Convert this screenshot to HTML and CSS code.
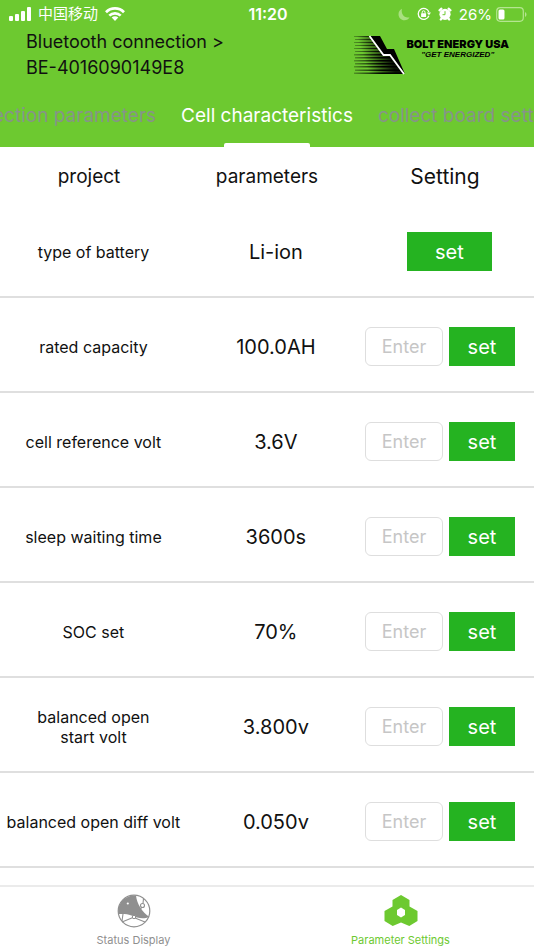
FILE: index.html
```html
<!DOCTYPE html>
<html lang="en">
<head>
<meta charset="utf-8">
<meta name="viewport" content="width=device-width, initial-scale=1">
<title>Parameter Settings</title>
<link rel="stylesheet" href="styles.css">
</head>
<body>
<header class="top">
  <div class="status">
    <div class="status-side">
      <svg width="22" height="14" viewBox="0 0 22 14" aria-hidden="true"><g fill="#fff"><rect x="0" y="9" width="4" height="5" rx="1"/><rect x="6" y="7" width="4" height="7" rx="1"/><rect x="12" y="4" width="4" height="10" rx="1"/><rect x="18" y="0" width="4" height="14" rx="1"/></g></svg>
      <span class="carrier" lang="zh">中国移动</span>
      <svg width="20" height="14" viewBox="0 0 20 14" aria-hidden="true"><g fill="none" stroke="#fff" stroke-width="2.7"><path d="M1 5.2C6 .2 14 .2 19 5.2"/><path d="M4.3 8.6C7.5 5.5 12.5 5.5 15.7 8.6"/></g><path d="M6.7 10.6C8.5 8.9 11.5 8.9 13.3 10.6L10 14Z" fill="#fff"/></svg>
    </div>
    <time class="clock">11:20</time>
    <div class="status-side status-right">
      <svg width="12" height="13" viewBox="0 0 12 13" aria-hidden="true"><path d="M4 .8C1.800 1.800.5 3.700.5 6.200c0 3.400 2.600 6 6 6 2.300 0 4.200-1.200 5-3-4.800 1.500-9-3-7.500-8.400Z" fill="#a9e07f"/></svg>
      <svg width="14" height="14" viewBox="0 0 14 14" aria-hidden="true"><path d="M11.900 8.700A5.500 5.500 0 1 1 11.900 5" fill="none" stroke="#fff" stroke-width="1.300"/><path d="M9.800 5.600h4.200L12 8.300Z" fill="#fff"/><rect x="4.100" y="6.200" width="5" height="3.700" rx=".5" fill="#fff"/><path d="M5.200 6.500V5.200a1.400 1.400 0 0 1 2.800 0v1.300" fill="none" stroke="#fff"/></svg>
      <svg width="14" height="14" viewBox="0 0 14 14" aria-hidden="true"><circle cx="7" cy="7.300" r="5.600" fill="#fff"/><g stroke="#fff" stroke-width="2.200" stroke-linecap="round"><path d="M1.500 3.300 3.400 1.700M12.500 3.300 10.600 1.700M2.800 12.500 4 11M11.200 12.500 10 11"/></g><path d="M7 4.200v3.500H4.500" fill="none" stroke="#6dc930" stroke-width="1"/></svg>
      <div class="power">
        <span>26%</span>
        <svg width="31" height="15" viewBox="0 0 31 15" aria-hidden="true"><rect x=".7" y=".7" width="26.600" height="13.600" rx="3.500" fill="none" stroke="#b5e591" stroke-width="1.200"/><rect x="2.500" y="2.500" width="6" height="10" rx="1.500" fill="#fff"/><path d="M29 5v5c2-1 2-4 0-5Z" fill="#b5e591"/></svg>
      </div>
    </div>
  </div>
  <div class="brand-row">
    <a class="device" href="#bluetooth">Bluetooth connection &gt;<br>BE-4016090149E8</a>
    <div class="brand">
      <svg width="53" height="40" viewBox="0 0 53 40" aria-hidden="true">
        <defs>
          <linearGradient id="streak" gradientUnits="userSpaceOnUse" x1="0" y1="0" x2="30" y2="0"><stop offset="0" stop-opacity=".25"/><stop offset="1"/></linearGradient>
          <linearGradient id="shade" gradientUnits="userSpaceOnUse" x1="6" y1="8" x2="30" y2="0"><stop offset="0" stop-opacity="0"/><stop offset="1" stop-opacity=".9"/></linearGradient>
        </defs>
        <path d="M1 1H18L31 20H37L51 39H1Z" fill="url(#shade)"/>
        <path d="M1 1H18V2H1ZM2 4H20V5H2ZM1 7H22V8H1ZM2 10H24V11H2ZM1 13H26V14H1ZM2 16H28V17H2ZM1 19H31V20.500H1ZM2 22H37V23.500H2ZM1 25H39V26.500H1ZM2 28H42V29.500H2ZM1 31H44V32.500H1ZM2 34.500H47V36H2ZM1 37.500H50V39H1Z" fill="url(#streak)"/>
        <path d="M17 1H27L34 14H41L52 39 37 21H31Z"/>
        <path d="M16.500 1 30.500 20H37L51 39" fill="none" stroke="#fff" stroke-width="1.800"/>
      </svg>
      <div class="brand-text"><span class="brand-name">BOLT ENERGY USA</span><span class="brand-tag">"GET ENERGIZED"</span></div>
    </div>
  </div>
  <nav class="tabs" aria-label="Parameter groups">
    <div class="tab-side tab-before"><a href="#protection">protection parameters</a></div>
    <a class="tab-active" href="#cell" aria-current="page">Cell characteristics</a>
    <div class="tab-side"><a href="#board">collect board settings</a></div>
  </nav>
</header>
<main class="content">
  <table class="params">
    <thead><tr><th>project</th><th>parameters</th><th class="th-large">Setting</th></tr></thead>
    <tbody>
      <tr><th scope="row">type of battery</th><td>Li-ion</td><td class="action action-single"><button class="set" type="button">set</button></td></tr>
      <tr><th scope="row">rated capacity</th><td>100.0AH</td><td class="action"><input aria-label="rated capacity" placeholder="Enter"><button class="set" type="button">set</button></td></tr>
      <tr><th scope="row">cell reference volt</th><td>3.6V</td><td class="action"><input aria-label="cell reference volt" placeholder="Enter"><button class="set" type="button">set</button></td></tr>
      <tr><th scope="row">sleep waiting time</th><td>3600s</td><td class="action"><input aria-label="sleep waiting time" placeholder="Enter"><button class="set" type="button">set</button></td></tr>
      <tr><th scope="row">SOC set</th><td>70%</td><td class="action"><input aria-label="SOC set" placeholder="Enter"><button class="set" type="button">set</button></td></tr>
      <tr><th scope="row">balanced open<br>start volt</th><td>3.800v</td><td class="action"><input aria-label="balanced open start volt" placeholder="Enter"><button class="set" type="button">set</button></td></tr>
      <tr><th scope="row">balanced open diff volt</th><td>0.050v</td><td class="action"><input aria-label="balanced open diff volt" placeholder="Enter"><button class="set" type="button">set</button></td></tr>
    </tbody>
  </table>
</main>
<nav class="bottom" aria-label="Main">
  <a href="#status">
    <svg width="34" height="34" viewBox="0 0 34 34" aria-hidden="true"><circle cx="17" cy="17" r="15.800" fill="none" stroke="#8f8f8f" stroke-width="1.200"/><path d="M1.500 20C0 9 8 1 19 1.500C20 10 25 18 32.500 23C26 25.500 20 24 16 22C10 19.500 5 20 1.500 20Z" fill="#8f8f8f"/><circle cx="10.800" cy="9.500" r="1.100" fill="#fff"/><g fill="none" stroke="#8f8f8f" stroke-width="1.100"><path d="M26.500 4.500 26 9.500M24.500 13.500 22.500 17M6 20 5 27M16 23.500 5 28M18 24 28 28"/><circle cx="25.500" cy="11.500" r="2"/></g><circle cx="17" cy="23" r="1.700" fill="#fff" stroke="#8f8f8f"/></svg>
    <span>Status Display</span>
  </a>
  <a class="current" href="#settings" aria-current="page">
    <svg width="34" height="34" viewBox="0 0 34 34" aria-hidden="true"><path d="M17 1 25.500 6V12.500L33.500 17V27L25.300 32 17 28.500 8.700 32 .5 27V17L8.500 12.500V6Z" fill="#6dc930"/><path d="M17 13.500 21 16V21L17 23.500 13 21V16Z" fill="#fff"/></svg>
    <span>Parameter Settings</span>
  </a>
</nav>
</body>
</html>
```
FILE: styles.css
```css
* { box-sizing: border-box; }

body {
  margin: 0;
  height: 100vh;
  display: flex;
  flex-direction: column;
  background: #fff;
  color: #111;
  font-family: Inter, "Noto Sans CJK SC", sans-serif;
}

a { color: inherit; text-decoration: none; }
svg { display: block; flex: none; }

.top { background: #6dc930; }

.status {
  display: grid;
  grid-template-columns: 1fr auto 1fr;
  align-items: center;
  height: 28px;
  padding: 0 7px 0 9px;
  color: #fff;
  font-size: 16px;
}
.status-side { display: flex; align-items: center; gap: 7px; }
.status-right { justify-content: flex-end; }
.carrier { font-size: 15px; line-height: 20px; }
.clock { font-weight: 600; }
.power { display: flex; align-items: center; gap: 4px; font-size: 15px; }

.brand-row {
  display: flex;
  justify-content: space-between;
  padding: 1px 25px 0 26px;
}
.device { font-size: 18px; line-height: 26px; color: #111; }
.brand { display: flex; padding-top: 6px; }
.brand-text { display: flex; flex-direction: column; align-items: center; color: #000; padding-top: 3px; }
.brand-name { font-size: 11px; line-height: 12px; font-weight: 900; }
.brand-tag { font: italic bold 8px/10px "Liberation Sans Narrow", "Liberation Sans", sans-serif; }

.tabs {
  display: grid;
  grid-template-columns: minmax(0, 1fr) auto minmax(0, 1fr);
  gap: 25px;
  height: 66px;
  padding-top: 4px;
  color: #87938a;
  font-size: 19px;
  line-height: 62px;
  white-space: nowrap;
}
.tab-side { display: flex; overflow: hidden; }
.tab-before { justify-content: flex-end; }
.tab-active { position: relative; color: #fff; }
.tab-active::after {
  content: "";
  position: absolute;
  left: 25%;
  right: 25%;
  bottom: 0;
  height: 4px;
  border-radius: 2px 2px 0 0;
  background: #fff;
}

.content { flex: 1; min-height: 0; overflow: hidden; }
.params, .params thead, .params tbody { display: block; }
.params tr { display: grid; align-items: center; text-align: center; }
.params th, .params td { padding: 0; font-weight: 400; }

.params thead tr {
  grid-template-columns: repeat(3, minmax(0, 1fr));
  height: 56px;
  padding-top: 2px;
  font-size: 19px;
}
.params .th-large { font-size: 21px; }

.params tbody tr {
  grid-template-columns: minmax(0, 21fr) minmax(0, 20fr) minmax(0, 19fr);
  height: 95px;
  padding-top: 4px;
  border-bottom: 2px solid #dfdfdf;
  font-size: 20px;
}
.params tbody th { font-size: 16px; line-height: 20px; }

.params .action { display: flex; gap: 6px; padding-right: 19px; }
.params .action-single { padding-right: 0; justify-content: center; }

.action input {
  flex: 1;
  min-width: 0;
  height: 39px;
  padding: 0;
  border: 1px solid #dedede;
  border-radius: 6px;
  background: #fff;
  font: 18px Inter, sans-serif;
  text-align: center;
}
.action input::placeholder { color: #c6c6c6; opacity: 1; }

.set {
  width: 66px;
  height: 39px;
  padding: 0;
  border: 0;
  background: #25b321;
  color: #fff;
  font: 20px Inter, sans-serif;
}
.action-single .set { width: 85px; }

.bottom {
  display: grid;
  grid-template-columns: 1fr 1fr;
  height: 65px;
  border-top: 2px solid #ebebeb;
  color: #8f8f8f;
  font-size: 11px;
  line-height: 14px;
}
.bottom a { display: flex; flex-direction: column; align-items: center; gap: 5px; padding-top: 7px; }
.bottom .current { color: #6dc930; }
```
